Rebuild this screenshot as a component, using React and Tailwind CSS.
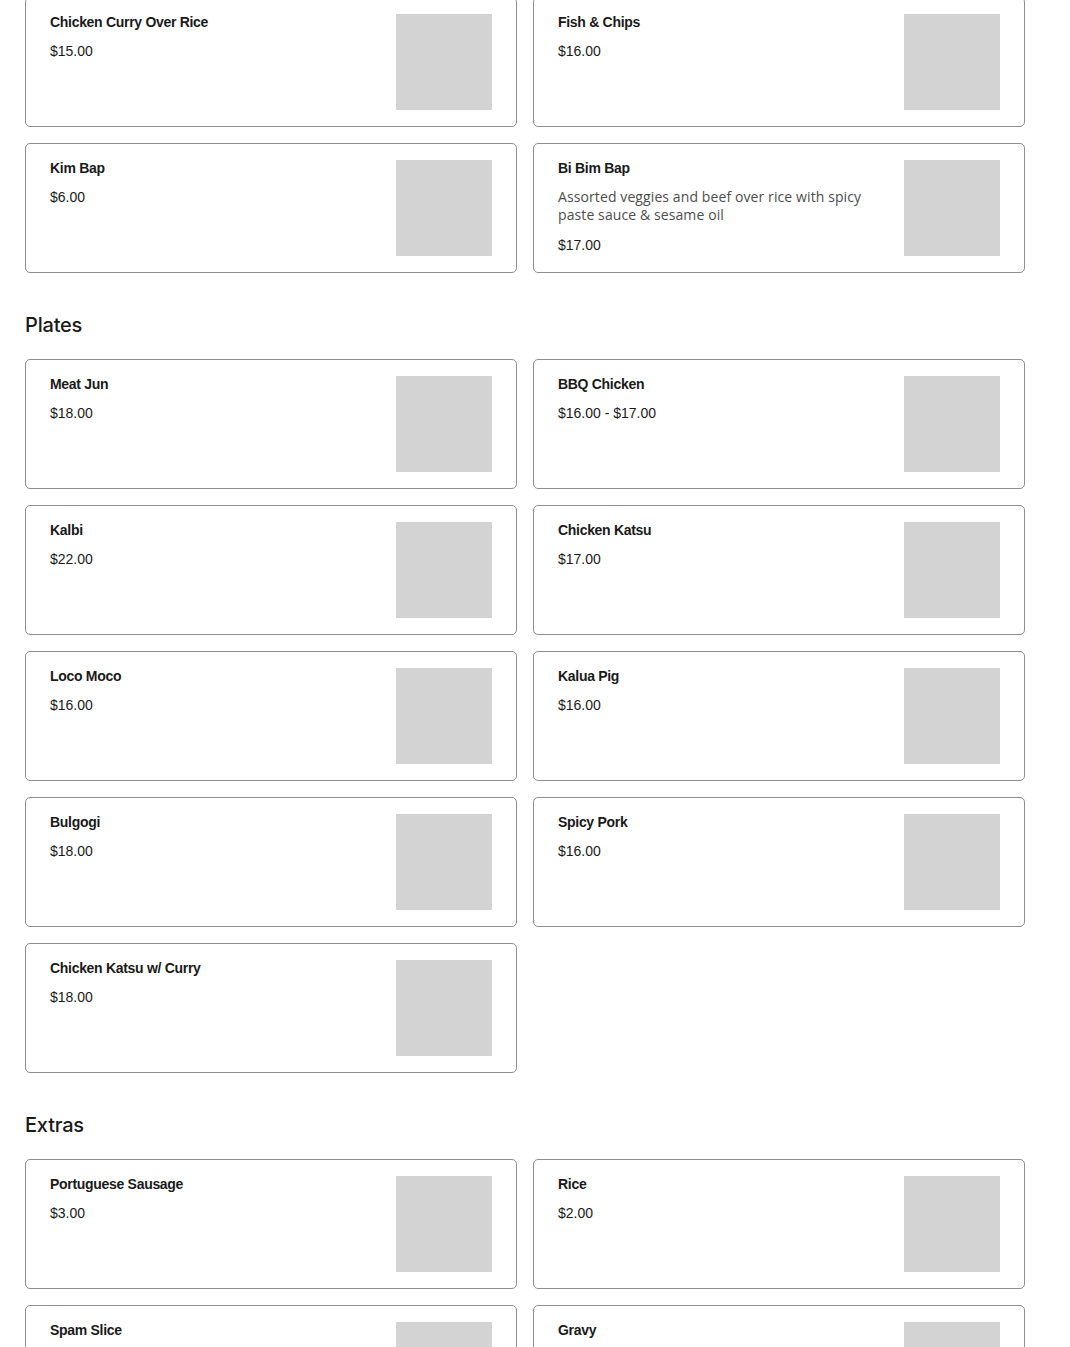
const sections = [
  {
    title: null,
    items: [
      { name: "Chicken Curry Over Rice", price: "$15.00" },
      { name: "Fish & Chips", price: "$16.00" },
      { name: "Kim Bap", price: "$6.00" },
      {
        name: "Bi Bim Bap",
        desc: "Assorted veggies and beef over rice with spicy paste sauce & sesame oil",
        price: "$17.00",
      },
    ],
  },
  {
    title: "Plates",
    items: [
      { name: "Meat Jun", price: "$18.00" },
      { name: "BBQ Chicken", price: "$16.00 - $17.00" },
      { name: "Kalbi", price: "$22.00" },
      { name: "Chicken Katsu", price: "$17.00" },
      { name: "Loco Moco", price: "$16.00" },
      { name: "Kalua Pig", price: "$16.00" },
      { name: "Bulgogi", price: "$18.00" },
      { name: "Spicy Pork", price: "$16.00" },
      { name: "Chicken Katsu w/ Curry", price: "$18.00" },
    ],
  },
  {
    title: "Extras",
    items: [
      { name: "Portuguese Sausage", price: "$3.00" },
      { name: "Rice", price: "$2.00" },
      { name: "Spam Slice", price: "$2.00" },
      { name: "Gravy", price: "$1.00" },
    ],
  },
];

function Card({ item }) {
  return (
    <div className="flex h-[130px] gap-4 rounded-[5px] border border-[#8e8e8e] bg-white pt-4 pb-4 pl-6 pr-6">
      <div className="flex min-w-0 flex-1 flex-col">
        <div className="text-[14px] font-semibold leading-[16px] tracking-[-0.3px] text-[#1a1a1a]">{item.name}</div>
        {item.desc && (
          <div className="mt-[12px] pr-4 font-['Open_Sans',sans-serif] text-[14px] leading-[18px] tracking-[0.1px] text-[#4d4d4d]">
            {item.desc}
          </div>
        )}
        <div className="mt-[12px] text-[14px] leading-[18px] text-[#1a1a1a]">{item.price}</div>
      </div>
      <div className="h-[96px] w-[96px] shrink-0 bg-[#d3d3d3]" />
    </div>
  );
}

export default function App() {
  return (
    <div
      className="mt-[-3px] min-h-[1350px] bg-white pl-[25px]"
      style={{ fontFamily: '"Liberation Sans", Arial, sans-serif' }}
    >
      <div className="w-[1000px]">
        {sections.map((s, i) => (
          <div key={i}>
            {s.title && (
              <h2 className="mt-[38px] mb-[20px] font-['Inter',sans-serif] text-[20px] font-medium leading-[28px] tracking-[-0.2px] text-[#1a1a1a]">
                {s.title}
              </h2>
            )}
            <div className="grid grid-cols-2 gap-4">
              {s.items.map((it) => (
                <Card key={it.name} item={it} />
              ))}
            </div>
          </div>
        ))}
      </div>
    </div>
  );
}
